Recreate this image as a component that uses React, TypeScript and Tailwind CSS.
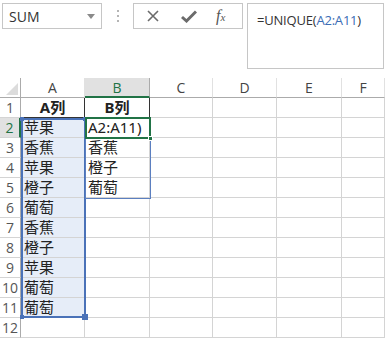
import React from 'react';

const cols = [
  { key: 'A', w: 'w-[64px]' },
  { key: 'B', w: 'w-[65px]' },
  { key: 'C', w: 'w-[63px]' },
  { key: 'D', w: 'w-[64px]' },
  { key: 'E', w: 'w-[65px]' },
  { key: 'F', w: 'w-[43px]' },
];

const colA = ['A列', '苹果', '香蕉', '苹果', '橙子', '葡萄', '香蕉', '橙子', '苹果', '葡萄', '葡萄', ''];
const colB = ['B列', 'A2:A11)', '香蕉', '橙子', '葡萄', '', '', '', '', '', '', ''];

const cellFont = { fontFamily: '"Noto Sans", "Noto Sans CJK SC", sans-serif' };

function TopBar() {
  return (
    <div className="h-[78px] flex items-start pt-[3px] pl-[2px]">
      <div className="w-[100px] h-[26px] border border-[#c6c6c6] flex items-center justify-between pl-[6px] pr-[6px]">
        <span className="text-[14px] text-[#333]">SUM</span>
        <svg width="8" height="5" viewBox="0 0 8 5"><path d="M0 0 L8 0 L4 5 Z" fill="#8a8a8a" /></svg>
      </div>
      <div className="w-[31px] h-[26px] flex flex-col items-center justify-center gap-[3px]">
        <span className="w-[2px] h-[2px] bg-[#b5b5b5]" />
        <span className="w-[2px] h-[2px] bg-[#b5b5b5]" />
        <span className="w-[2px] h-[2px] bg-[#b5b5b5]" />
      </div>
      <div className="w-[110px] h-[26px] border border-[#c6c6c6] flex items-center">
        <svg className="ml-[13px]" width="12" height="12" viewBox="0 0 12 12">
          <path d="M1 1 L11 11 M11 1 L1 11" stroke="#6b6b6b" strokeWidth="1.6" />
        </svg>
        <svg className="ml-[22px]" width="16" height="13" viewBox="0 0 16 13">
          <path d="M1 7 L5.5 11 L15 1.5" stroke="#6b6b6b" strokeWidth="3" fill="none" />
        </svg>
        <span className="ml-[19px] text-[16px] italic text-[#555]" style={{ fontFamily: '"Liberation Serif", serif' }}>
          f<span className="text-[11px]">x</span>
        </span>
      </div>
      <div className="ml-[4px] w-[137px] h-[66px] border border-[#c6c6c6] pl-[9px] pt-[3px] whitespace-nowrap">
        <span className="text-[13px] text-[#333] tracking-[-0.2px]">
          =UNIQUE(<span className="text-[#3a6db5]">A2:A11</span>)
        </span>
      </div>
    </div>
  );
}

function HeaderRow() {
  return (
    <div className="flex h-[20px]">
      <div className="w-[21px] h-[20px] border-r border-b border-[#ababab] relative bg-white">
        <svg className="absolute right-[2px] bottom-[2px]" width="12" height="12" viewBox="0 0 12 12">
          <path d="M12 0 L12 12 L0 12 Z" fill="#dcdcdc" />
        </svg>
      </div>
      {cols.map((c) => (
        <div
          key={c.key}
          className={`${c.w} h-[20px] flex items-center justify-center text-[14px] border-r ${
            c.key === 'B'
              ? 'bg-[#e1e1e1] text-[#217346] border-b-2 border-b-[#217346] border-r-[#ababab]'
              : 'bg-white text-[#444] border-b border-b-[#ababab] border-r-[#e1e1e1]'
          }`}
        >
          {c.key}
        </div>
      ))}
    </div>
  );
}

function Row({ n }: { n: number }) {
  const i = n - 1;
  const sel = n === 2;
  return (
    <div className="flex h-[20px]">
      <div
        className={`w-[21px] h-[20px] flex items-center justify-center text-[14px] border-b border-[#d4d4d4] ${
          sel ? 'bg-[#e1e1e1] text-[#217346] border-r-2 border-r-[#217346]' : 'bg-white text-[#555] border-r border-r-[#ababab]'
        }`}
      >
        {n}
      </div>
      {cols.map((c) => {
        let text = '';
        if (c.key === 'A') text = colA[i];
        if (c.key === 'B') text = colB[i];
        const head = n === 1 && (c.key === 'A' || c.key === 'B');
        const inRange = c.key === 'A' && n >= 2 && n <= 11;
        return (
          <div
            key={c.key}
            className={`${c.w} h-[20px] flex items-center text-[15px] text-[#222] border-r border-b ${
              head ? 'justify-center font-bold border-r-[#333] border-b-[#333]' : 'pl-[3px] border-r-[#d4d4d4] border-b-[#d4d4d4]'
            } ${inRange ? 'bg-[#e6edf8]' : ''}`}
            style={cellFont}
          >
            {text}
          </div>
        );
      })}
    </div>
  );
}

export default function App() {
  return (
    <div
      className="w-[385px] h-[339px] bg-white overflow-hidden"
      style={{ fontFamily: '"Open Sans", "Noto Sans CJK SC", sans-serif' }}
    >
      <TopBar />
      <div className="relative">
        <HeaderRow />
        {Array.from({ length: 12 }, (_, k) => (
          <Row key={k} n={k + 1} />
        ))}
        {/* A2:A11 reference highlight */}
        <div className="absolute left-[21px] top-[40px] w-[65px] h-[200px] border-2 border-[#4a72b8] pointer-events-none">
          <span className="absolute -left-[3px] -top-[3px] w-[4px] h-[4px] bg-[#4a72b8]" />
          <span className="absolute -right-[3px] -top-[3px] w-[4px] h-[4px] bg-[#4a72b8]" />
          <span className="absolute -left-[3px] -bottom-[3px] w-[4px] h-[4px] bg-[#4a72b8]" />
          <span className="absolute -right-[4px] -bottom-[4px] w-[6px] h-[6px] bg-[#4a72b8]" />
        </div>
        {/* B3:B5 spill outline */}
        <div className="absolute left-[85px] top-[60px] w-[66px] h-[61px] border border-[#5b7fc0] pointer-events-none" />
        {/* B2 active cell */}
        <div className="absolute left-[85px] top-[39px] w-[66px] h-[22px] border-2 border-[#217346] pointer-events-none">
          <span className="absolute -right-[4px] -bottom-[4px] w-[5px] h-[5px] bg-[#217346] border border-white" />
        </div>
      </div>
    </div>
  );
}
